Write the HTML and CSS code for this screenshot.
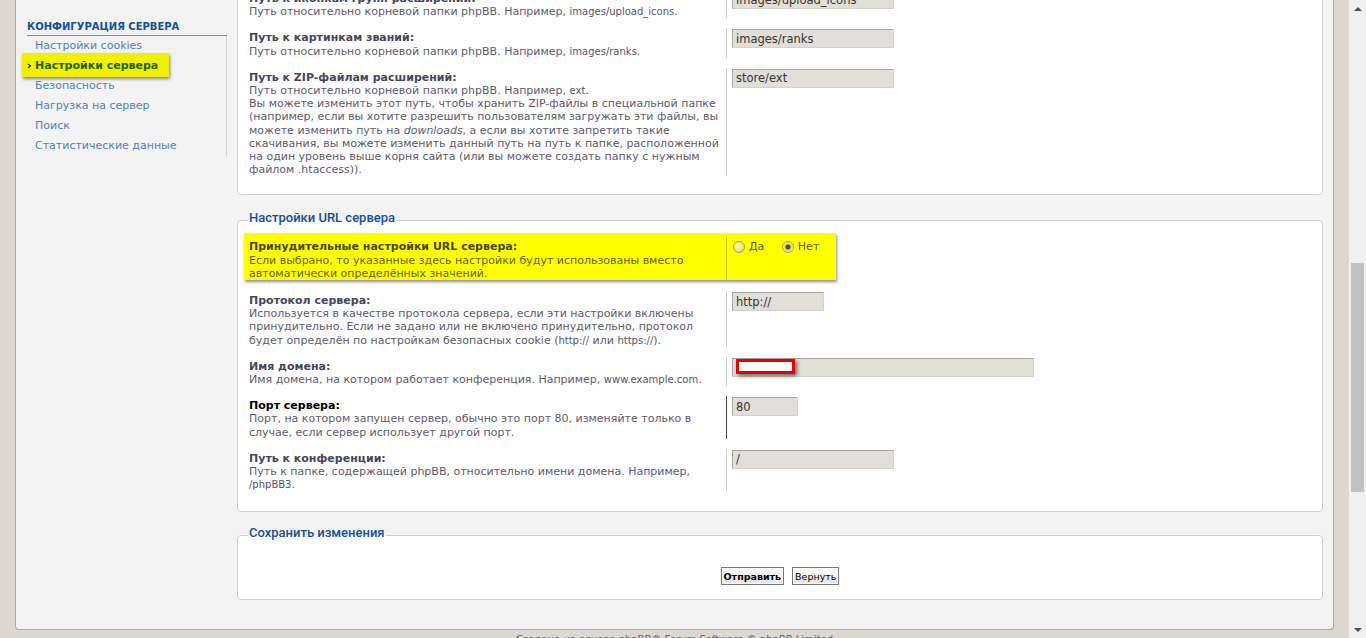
FILE: index.html
```html
<!DOCTYPE html>
<html lang="ru">
  <head>
    <meta charset="UTF-8" />
    <title>Настройки сервера</title>
    <link rel="stylesheet" href="styles.css">
  </head>
  <body>
    <div class="screen">
      <div class="page">
        <div class="wrap">
          <div class="sidebar">
            <div class="menu-head">Конфигурация сервера</div>
            <ul class="menu">
              <li><a href="#">Настройки cookies</a></li>
              <li class="active"><a href="#"><span class="arrow">›</span>Настройки сервера</a></li>
              <li><a href="#">Безопасность</a></li>
              <li><a href="#">Нагрузка на сервер</a></li>
              <li><a href="#">Поиск</a></li>
              <li><a href="#">Статистические данные</a></li>
            </ul>
          </div>

          <div class="main">
            <div class="panel panel-top">
              <dl class="row">
                <dt><span class="title">Путь к иконкам групп расширений:</span><span class="desc">Путь относительно корневой папки phpBB. Например, <samp>images/upload_icons</samp>.</span></dt>
                <dd><input class="inp w162" type="text" value="images/upload_icons"></dd>
              </dl>
              <dl class="row">
                <dt><span class="title">Путь к картинкам званий:</span><span class="desc">Путь относительно корневой папки phpBB. Например, <samp>images/ranks</samp>.</span></dt>
                <dd><input class="inp w162" type="text" value="images/ranks"></dd>
              </dl>
              <dl class="row">
                <dt><span class="title">Путь к ZIP-файлам расширений:</span><span class="desc">Путь относительно корневой папки phpBB. Например, <samp>ext</samp>.<br>Вы можете изменить этот путь, чтобы хранить ZIP-файлы в специальной папке (например, если вы хотите разрешить пользователям загружать эти файлы, вы можете изменить путь на <em>downloads</em>, а если вы хотите запретить такие скачивания, вы можете изменить данный путь на путь к папке, расположенной на один уровень выше корня сайта (или вы можете создать папку с нужным файлом .htaccess)).</span></dt>
                <dd><input class="inp w162" type="text" value="store/ext"></dd>
              </dl>
            </div>

            <fieldset class="panel">
              <legend>Настройки URL сервера</legend>
              <dl class="row hl">
                <dt><span class="title">Принудительные настройки URL сервера:</span><span class="desc">Если выбрано, то указанные здесь настройки будут использованы вместо автоматически определённых значений.</span></dt>
                <dd>
                  <label class="opt"><input class="radio" type="radio" name="force"> Да</label>
                  <label class="opt"><input class="radio" type="radio" name="force" checked> Нет</label>
                </dd>
              </dl>
              <dl class="row">
                <dt><span class="title">Протокол сервера:</span><span class="desc">Используется в качестве протокола сервера, если эти настройки включены принудительно. Если не задано или не включено принудительно, протокол будет определён по настройкам безопасных cookie (<samp>http://</samp> или <samp>https://</samp>).</span></dt>
                <dd><input class="inp w92" type="text" value="http://"></dd>
              </dl>
              <dl class="row">
                <dt><span class="title">Имя домена:</span><span class="desc">Имя домена, на котором работает конференция. Например, <samp>www.example.com</samp>.</span></dt>
                <dd class="masked"><input class="inp w302" type="text" value=""><span class="redact"></span></dd>
              </dl>
              <dl class="row focus">
                <dt><span class="title">Порт сервера:</span><span class="desc">Порт, на котором запущен сервер, обычно это порт 80, изменяйте только в случае, если сервер использует другой порт.</span></dt>
                <dd><input class="inp w66" type="text" value="80"></dd>
              </dl>
              <dl class="row">
                <dt><span class="title">Путь к конференции:</span><span class="desc">Путь к папке, содержащей phpBB, относительно имени домена. Например, <samp>/phpBB3</samp>.</span></dt>
                <dd><input class="inp w162" type="text" value="/"></dd>
              </dl>
            </fieldset>

            <fieldset class="panel submit">
              <legend>Сохранить изменения</legend>
              <p class="buttons">
                <input class="btn bold" type="submit" value="Отправить">
                <input class="btn" type="reset" value="Вернуть">
              </p>
            </fieldset>
          </div>
        </div>
        <div class="footer">Создано на основе <a href="#">phpBB</a>® Forum Software © phpBB Limited</div>
      </div>

      <div class="scrollbar">
        <div class="sb-arrow up"></div>
        <div class="sb-track"><div class="sb-thumb"></div></div>
        <div class="sb-arrow down"></div>
      </div>
    </div>
  </body>
</html>
```

FILE: styles.css
```css
* {
  margin: 0;
  padding: 0;
  box-sizing: border-box;
}
html,
body {
  height: 638px;
  overflow: hidden;
}
body {
  font-family: "DejaVu Sans", Verdana, sans-serif;
  font-size: 11px;
  color: #333;
  background: #dcd8d0;
}
ul {
  list-style: none;
}
a {
  text-decoration: none;
}

.screen {
  display: flex;
  height: 638px;
}
.page {
  flex: 1;
  overflow: hidden;
}
.wrap {
  display: flex;
  margin: 0 15px 0 15px;
  background: #f3f3f3;
  border: 1px solid #a9a9a9;
  border-top: 0;
  border-radius: 0 0 4px 4px;
}

/* sidebar */
.sidebar {
  width: 211px;
  flex: none;
  padding: 20px 0 0 11px;
}
.menu-head {
  font-size: 10px;
  font-weight: bold;
  text-transform: uppercase;
  color: #115098;
  line-height: 14px;
  padding-bottom: 1px;
  border-bottom: 1px solid #6b93c0;
}
.menu {
  border-right: 1px solid #d4d4d4;
}
.menu li {
  line-height: 20px;
  padding-left: 8px;
}
.menu li a {
  color: #4b82bd;
}
.menu li.active a {
  display: block;
  width: fit-content;
  margin: -3px 0 -1px -13px;
  padding: 3px 11px 1px 5px;
  background: #f0f000;
  color: #226308;
  font-weight: bold;
  box-shadow: 1px 2px 3px rgba(0, 0, 0, 0.45);
}
.arrow {
  display: inline-block;
  width: 8px;
  color: #000;
}

/* main */
.main {
  flex: 1;
  margin: 0 10px 0 10px;
  padding-bottom: 29px;
}
.panel {
  background: #fff;
  border: 1px solid #cfcfcf;
  border-radius: 4px;
  padding: 10px 11px 18px 11px;
}
.panel-top {
  margin-top: -22px;
}
fieldset.panel {
  margin-top: 15px;
  padding-top: 6px;
  padding-bottom: 20px;
}
legend {
  font-family: Roboto, "Liberation Sans", sans-serif;
  font-size: 13px;
  font-weight: 500;
  color: #115098;
  line-height: 15px;
  padding: 0 1px 6px 1px;
  margin-left: -1px;
}

.row {
  display: flex;
  margin-bottom: 10px;
  line-height: 13.2px;
}
.row:last-of-type {
  margin-bottom: 0;
}
.row dt {
  width: 477px;
  flex: none;
  padding: 3px 6px 0 0;
}
.row dd {
  flex: 1;
  border-left: 1px solid #cccccc;
  padding: 1px 0 0 5px;
}
.title {
  display: block;
  font-weight: bold;
  color: #46465a;
}
.desc {
  display: block;
  color: #5e5a70;
}
samp {
  font-family: "DejaVu Sans", sans-serif;
  font-size: 10px;
  color: #55536a;
}

.row.focus .title {
  color: #000;
}
.row.focus dd {
  border-left-color: #444;
}

/* highlighted row */
.row.hl {
  width: 592px;
  margin: -4px 0 11px -5px;
  padding: 4px 0 0 5px;
  background: #ffff00;
  box-shadow: 1px 2px 3px rgba(0, 0, 0, 0.45);
}
.row.hl .title {
  color: #47480a;
}
.row.hl .desc {
  color: #64620a;
}
.row.hl dd {
  border-left-color: #c8c800;
  padding-top: 3px;
}
.opt {
  display: inline-flex;
  align-items: center;
  margin-right: 13px;
  color: #5c5c0a;
  font-size: 11px;
}
.radio {
  appearance: none;
  width: 12px;
  height: 12px;
  margin: 0 4px 0 1px;
  border-radius: 50%;
  border: 1px solid #a8a850;
  background: radial-gradient(circle at 40% 35%, #ffffb0, #d6d660);
}
.radio:checked {
  background: radial-gradient(circle, #50501a 0, #50501a 2px, #d6d660 3px, #ffffb0 6px);
}

/* inputs */
.inp {
  height: 19px;
  padding: 0 3px;
  font-family: "DejaVu Sans", Verdana, sans-serif;
  font-size: 11.5px;
  color: #333;
  background: #e2dfd8;
  border: 1px solid;
  border-color: #aaa69f #d5d1ca #d5d1ca #aaa69f;
}
.w162 { width: 162px; }
.w92 { width: 92px; }
.w302 { width: 302px; }
.w66 { width: 66px; }

.masked {
  position: relative;
}
.redact {
  position: absolute;
  left: 9px;
  top: 2px;
  width: 59px;
  height: 15px;
  background: #fff;
  border: 3px solid #e60000;
  box-shadow: 2px 2px 4px rgba(0, 0, 0, 0.55);
}

/* submit */
fieldset.submit {
  margin-top: 13px;
  padding-bottom: 14px;
}
.buttons {
  text-align: center;
  padding-top: 15px;
  font-size: 0;
}
.btn {
  height: 18px;
  margin: 0 4px;
  padding: 0 2px;
  font-family: "DejaVu Sans", Verdana, sans-serif;
  font-size: 9.5px;
  color: #000;
  background: linear-gradient(#fbfbfb, #e6e6e6);
  border: 1px solid #777;
  box-shadow: inset 0 0 0 1px #fff;
}
.btn.bold {
  font-weight: bold;
}

.footer {
  text-align: center;
  padding-top: 4px;
  font-size: 10px;
  color: #536482;
}
.footer a {
  color: #536482;
}

/* fake scrollbar */
.scrollbar {
  width: 17px;
  display: flex;
  flex-direction: column;
  background: #f0f0f0;
}
.sb-arrow {
  height: 17px;
  display: flex;
  align-items: center;
  justify-content: center;
}
.sb-arrow::before {
  content: "";
  border-left: 4px solid transparent;
  border-right: 4px solid transparent;
}
.sb-arrow.up::before {
  border-bottom: 4px solid #505050;
}
.sb-arrow.down::before {
  border-top: 4px solid #505050;
}
.sb-track {
  flex: 1;
  padding: 0 2px;
}
.sb-thumb {
  margin-top: 246px;
  height: 229px;
  background: #c1c1c1;
}
```
